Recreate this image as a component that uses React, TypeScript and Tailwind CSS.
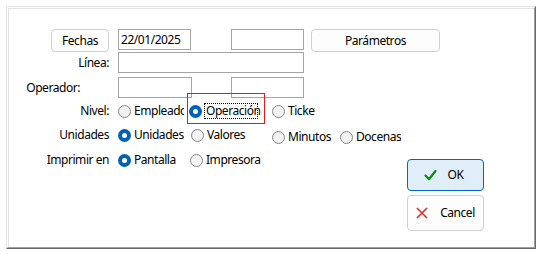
import React from "react";

const font = { fontFamily: '"Noto Sans", "Segoe UI", sans-serif' };

function Radio({ checked }: { checked?: boolean }) {
  if (checked) {
    return (
      <span className="flex h-[13px] w-[13px] shrink-0 items-center justify-center rounded-full bg-[#0062b4]">
        <span className="h-[5px] w-[5px] rounded-full bg-white" />
      </span>
    );
  }
  return <span className="h-[13px] w-[13px] shrink-0 rounded-full border border-[#858585] bg-[#f2f2f2]" />;
}

function Option({ label, checked, width }: { label: string; checked?: boolean; width?: string }) {
  return (
    <div className={`flex h-[20px] shrink-0 items-center gap-[3px] overflow-hidden whitespace-nowrap ${width ?? ""}`}>
      <Radio checked={checked} />
      <span>{label}</span>
    </div>
  );
}

function Label({ children }: { children: React.ReactNode }) {
  return <div className="w-[100px] shrink-0 text-right leading-[20px]">{children}</div>;
}

function Input({ w, value }: { w: string; value?: string }) {
  return (
    <div className={`h-[21px] ${w} shrink-0 border border-[#a5a5a5] bg-white pl-[2px] leading-[19px]`}>{value}</div>
  );
}

export default function App() {
  return (
    <div className="h-[254px] w-[542px] bg-white pl-[6px] pt-[6px] text-[12px] tracking-[-0.45px] text-black" style={font}>
      <div className="h-[243px] w-[530px] border border-b-[#696969] border-l-[#e3e3e3] border-r-[#696969] border-t-[#e3e3e3]">
        <div className="h-full w-full border border-b-[#a0a0a0] border-l-white border-r-[#a0a0a0] border-t-white">
          <div className="h-full w-full border-l border-t border-l-[#e3e3e3] border-t-[#e3e3e3] pt-[20px]">
            {/* Row 1 */}
            <div className="flex items-start">
              <div className="flex w-[100px] shrink-0 justify-end">
                <button className="h-[23px] w-[58px] rounded-[4px] border border-[#d0d0d0] bg-[#fdfdfd]">Fechas</button>
              </div>
              <div className="ml-[9px]">
                <Input w="w-[73px]" value="22/01/2025" />
              </div>
              <div className="ml-[40px]">
                <Input w="w-[73px]" />
              </div>
              <button className="ml-[7px] h-[23px] w-[129px] rounded-[4px] border border-[#d0d0d0] bg-[#fdfdfd]">
                Parámetros
              </button>
            </div>
            {/* Row 2 */}
            <div className="flex items-center">
              <Label>Línea:</Label>
              <div className="ml-[9px]">
                <Input w="w-[186px]" />
              </div>
            </div>
            {/* Row 3 */}
            <div className="mt-[4px] flex items-center">
              <div className="w-[71px] shrink-0 text-right leading-[20px]">Operador:</div>
              <div className="ml-[38px]">
                <Input w="w-[74px]" />
              </div>
              <div className="ml-[39px]">
                <Input w="w-[73px]" />
              </div>
            </div>
            {/* Nivel */}
            <div className="mt-[3px] flex items-center">
              <Label>Nivel:</Label>
              <div className="ml-[9px] flex items-center">
                <Option label="Empleado" width="w-[66px]" />
                <div className="relative ml-[5px] flex h-[20px] shrink-0 items-center">
                  <div className="pointer-events-none absolute left-[-2px] top-[-8px] h-[31px] w-[78px] border border-[#e81818]" />
                  <Radio checked />
                  <span className="ml-[2px] w-[54px] whitespace-nowrap border border-dotted border-black pl-[1px] leading-[14px]">Operación</span>
                </div>
                <div className="ml-[14px]">
                  <Option label="Ticket" width="w-[43px]" />
                </div>
              </div>
            </div>
            {/* Unidades */}
            <div className="mt-[4px] flex items-start">
              <Label>Unidades</Label>
              <div className="ml-[9px] flex items-center">
                <Option label="Unidades" checked width="w-[73px]" />
                <Option label="Valores" width="w-[81px]" />
              </div>
              <div className="mt-[2px] flex items-center">
                <Option label="Minutos" width="w-[68px]" />
                <Option label="Docenas" />
              </div>
            </div>
            {/* Imprimir */}
            <div className="mt-[3px] flex items-start">
              <Label>Imprimir en</Label>
              <div className="ml-[9px] flex w-[289px] shrink-0 items-center">
                <Option label="Pantalla" checked width="w-[72px]" />
                <Option label="Impresora" />
              </div>
              <div className="mt-[9px] flex w-[77px] shrink-0 flex-col gap-[4px]">
                <button className="flex h-[32px] items-center justify-center gap-[11px] rounded-[4px] border border-[#0067c0] bg-[#e0eef9]">
                  <svg width="13" height="11" viewBox="0 0 13 11">
                    <path d="M1.5 5.5 L5 9.2 L11.5 1" fill="none" stroke="#0a8a0a" strokeWidth="2.2" strokeLinecap="round" strokeLinejoin="round" />
                  </svg>
                  <span className="pr-[4px]">OK</span>
                </button>
                <button className="flex h-[36px] items-center justify-center gap-[12px] rounded-[4px] border border-[#d0d0d0] bg-[#fdfdfd]">
                  <svg width="12" height="12" viewBox="0 0 12 12">
                    <path d="M1 1 L11 11 M11 1 L1 11" fill="none" stroke="#e0302a" strokeWidth="1.6" />
                  </svg>
                  <span>Cancel</span>
                </button>
              </div>
            </div>
          </div>
        </div>
      </div>
    </div>
  );
}
